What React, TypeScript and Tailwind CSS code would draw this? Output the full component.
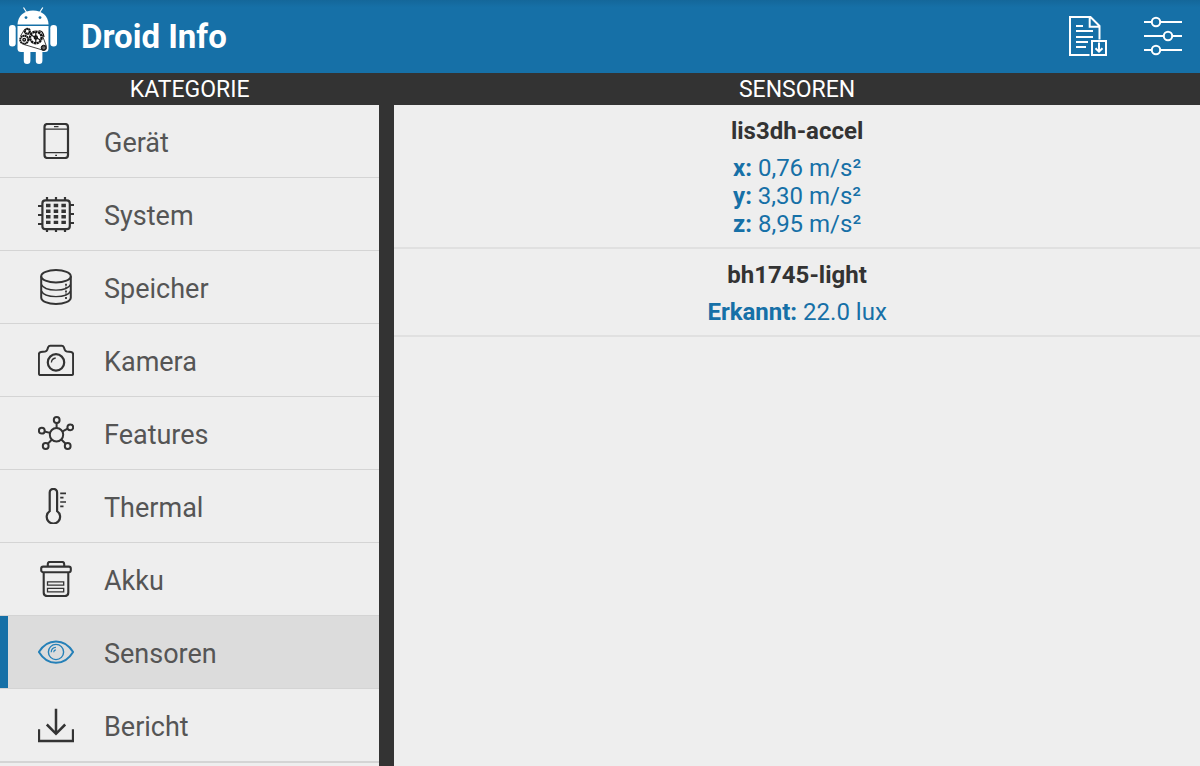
import { useState } from "react";
import type { ReactNode } from "react";

const iconStyle = "size-9 shrink-0 fill-none";
const panelTitle = "h-8 bg-[#333333] pt-px text-center text-[23px] leading-8 text-white uppercase";

type Category = { name: string; icon: ReactNode };

const categories: Category[] = [
  {
    name: "Gerät",
    icon: (
      <>
        <rect x="6.5" y="1" width="23.5" height="34" rx="3" strokeWidth="2.2" />
        <path d="M7 6.2h23M7 29.7h23" strokeWidth="1.3" />
        <path d="M16 3.6h4.5M17.2 32.4h1.8" strokeWidth="1.2" />
      </>
    ),
  },
  {
    name: "System",
    icon: (
      <>
        <rect x="4.4" y="4.4" width="27.4" height="28.8" rx="3" strokeWidth="2.2" />
        <path d="M9 1v3M18 1v3M27 1v3M9 33.5V36M18 33.5V36M27 33.5V36M0 10h4M0 19h4M0 28h4M32 9h4M32 18h4M32 27h4" strokeWidth="2.2" />
        <path d="M8 9.5h4.5M15.7 9.5h4.5M23.4 9.5h4.5M8 15.2h4.5M15.7 15.2h4.5M23.4 15.2h4.5M8 20.8h4.5M15.7 20.8h4.5M23.4 20.8h4.5M8 26.4h4.5M15.7 26.4h4.5M23.4 26.4h4.5" strokeWidth="3.4" />
      </>
    ),
  },
  {
    name: "Speicher",
    icon: (
      <>
        <ellipse cx="18" cy="7.2" rx="14.8" ry="6.2" strokeWidth="2" />
        <path d="M3.2 7.2v21.3C3.2 32.2 9.8 35 18 35s14.8-2.8 14.8-6.5V7.2" strokeWidth="2" />
        <path d="M3.5 15.5c1.2 3.4 7.2 5.6 14.5 5.6s13.3-2.2 14.5-5.6M3.5 22c1.2 3.4 7.2 5.6 14.5 5.6s13.3-2.2 14.5-5.6" strokeWidth="1.4" />
        <path d="M28 14.7v2M28 17.8v1M28 21.5v2M28 24.5v1M28 28v2" strokeWidth="1.8" />
      </>
    ),
  },
  {
    name: "Kamera",
    icon: (
      <>
        <path d="M.9 31.5V12.4c0-1.400.6-2.200 2-2.400l4.200-.5c1.200-.2 1.700-.7 2.100-1.700l1-2.600c.4-1 1-1.400 2-1.400h11.600c1 0 1.600.4 2 1.400l1 2.600c.4 1 .9 1.500 2.100 1.700l4.200.5c1.400.2 2 1 2 2.400v19.100c0 1-.7 1.600-1.600 1.600h-31c-.9 0-1.600-.6-1.600-1.600Z" strokeWidth="2" />
        <circle cx="18" cy="20.4" r="8.2" strokeWidth="2.2" />
        <path d="M13.4 20.5c.2-2.600 1.700-4.200 4.300-4.500" strokeWidth="1.300" />
      </>
    ),
  },
  {
    name: "Features",
    icon: (
      <g strokeWidth="2">
        <circle cx="18.5" cy="19.7" r="6.7" />
        <circle cx="18.7" cy="5" r="2.9" />
        <circle cx="32.3" cy="12.3" r="2.9" />
        <circle cx="29.7" cy="31" r="2.9" />
        <circle cx="7.7" cy="31" r="2.9" />
        <circle cx="3.8" cy="15.7" r="2.9" />
        <path d="M18.6 8v5M29.6 13.7l-5 2.7M27.6 28.700l-4.300-4.200M9.800 28.700l4.200-4.200M6.700 16.500l5.200 1.400" />
      </g>
    ),
  },
  {
    name: "Thermal",
    icon: (
      <>
        <path d="M11.7 23.2V4.500a3.700 3.700 0 0 1 7.400 0v18.700a6.700 6.700 0 1 1-7.400 0Z" strokeWidth="2.200" />
        <path d="M22.2 5.4H28M22.2 9.7h3.300M22.2 14H28M22.2 18.3h3.300" strokeWidth="1.700" />
      </>
    ),
  },
  {
    name: "Akku",
    icon: (
      <>
        <rect x="3.2" y="5.6" width="29.6" height="5.6" rx="2" strokeWidth="2.1" />
        <path d="M9.8 5.5V3.3C9.8 1.700 10.600.9 12 .9h12c1.400 0 2.200.8 2.200 2.400v2.200M5.700 11.400v20.200c0 2.200 1.200 3.500 3.400 3.500h17.800c2.200 0 3.400-1.300 3.400-3.500V11.400" strokeWidth="2.1" />
        <path d="M9.5 20.8h16.200v3.400H9.5zM9.5 27.4h16.200v3.400H9.5z" strokeWidth="1.3" />
      </>
    ),
  },
  {
    name: "Sensoren",
    icon: (
      <>
        <path d="M.9 18C4.500 12 10.500 7.400 18 7.400S31.500 12 35.100 18C31.500 24 25.500 28.800 18 28.800S4.500 24 .9 18Z" strokeWidth="2" />
        <circle cx="18" cy="18" r="7.6" strokeWidth="1.4" />
        <path d="M13.2 18.200c.1-2.900 2-4.800 4.700-4.900M15.700 18.200c.1-1.300.9-2.200 2.200-2.300" strokeWidth="1.2" />
      </>
    ),
  },
  {
    name: "Bericht",
    icon: (
      <>
        <path d="M18 1.800v25M8.800 17.500l9.200 9.300 9.200-9.300" strokeWidth="2.500" />
        <path d="M1 22.300v11.700h34V22.300" strokeWidth="2.300" />
      </>
    ),
  },
];

const sensors = [
  {
    name: "lis3dh-accel",
    values: [
      { label: "x:", value: "0,76 m/s²" },
      { label: "y:", value: "3,30 m/s²" },
      { label: "z:", value: "8,95 m/s²" },
    ],
  },
  {
    name: "bh1745-light",
    values: [{ label: "Erkannt:", value: "22.0 lux" }],
  },
];

const Logo = () => (
  <svg viewBox="9 6 48 58" className="h-[58px] w-12 shrink-0" aria-hidden="true">
    <g fill="#fff">
      <path d="M17.5 24.5C17.8 16 24 10.5 33 10.5S48.300 16 48.600 24.500Z" />
      <path d="M17.5 26h31v22.500a3.500 3.500 0 0 1-3.500 3.500H21a3.500 3.500 0 0 1-3.500-3.500Z" />
      <rect x="9" y="25" width="6.7" height="21.5" rx="3.3" />
      <rect x="50.3" y="25" width="6.7" height="21.5" rx="3.3" />
      <rect x="23.8" y="46" width="6.6" height="18" rx="3.3" />
      <rect x="35.8" y="46" width="6.6" height="18" rx="3.3" />
    </g>
    <path d="M23.5 7.5l3.2 5M42.8 7.5l-3.2 5" stroke="#fff" strokeWidth="1.2" />
    <circle cx="26" cy="17.6" r="1.4" fill="#1670a7" />
    <circle cx="40" cy="17.6" r="1.4" fill="#1670a7" />
    <g fill="none" stroke="#111">
      <path d="M24 44.5L43.5 50.3M42 34.5L46.5 46.5M20.5 36l4-6.5" strokeWidth=".8" />
      <circle cx="27.3" cy="31.3" r="2.5" strokeWidth="2.2" strokeDasharray="1.8 .3" />
      <circle cx="35.8" cy="37.5" r="5.8" strokeWidth="2.4" strokeDasharray="2.4 .5" />
      <circle cx="35.8" cy="37.5" r="1.5" strokeWidth="1.5" />
      <path d="M35.8 32v11M31 35l9.500 5M38.500 31c3-1 5 2 5.500 6" strokeWidth="1.2" />
      <circle cx="24.2" cy="39.7" r="4" strokeWidth="1.9" strokeDasharray="1.8 .3" />
      <circle cx="24.2" cy="39.7" r="1.3" strokeWidth="1.4" />
      <circle cx="43.8" cy="47.8" r="2.6" fill="#333" strokeWidth="1" />
      <circle cx="43.8" cy="47.8" r=".9" stroke="#aaa" strokeWidth=".6" />
    </g>
  </svg>
);

const App = () => {
  const [active, setActive] = useState("Sensoren");

  return (
    <div className="flex min-h-screen flex-col bg-[#333333] font-[Roboto,sans-serif]">
      <header className="flex h-[73px] items-center bg-linear-to-b from-[#14679a] to-[#1670a7] to-10% pr-[17px] pb-[3px] pl-[9px]">
        <Logo />
        <h1 className="ml-6 pt-[3px] text-[33px] font-bold text-white">Droid Info</h1>
        <div className="ml-auto flex gap-[35px] pt-px">
          <button aria-label="Bericht speichern" className="cursor-pointer">
            <svg viewBox="0 0 40 40" className="size-10 fill-none stroke-white">
              <path d="M21.5 39H2V1h20.500l9 9v13.500M21.700 1v9.800h9.800" strokeWidth="2" />
              <path d="M8 10h7M8 15h17M8 21h17M8 26h12M8 31h10" strokeWidth="2" />
              <path d="M24 25h14v14H24zM31 26.500v9M27.500 32.200l3.500 3.500 3.500-3.500" strokeWidth="2" />
            </svg>
          </button>
          <button aria-label="Einstellungen" className="cursor-pointer">
            <svg viewBox="0 0 40 40" className="size-10 fill-none stroke-white" strokeWidth="2">
              <path d="M1 6h8M17 6h22M1 20h20M29 20h10M1 34h8M17 34h22" />
              <circle cx="13" cy="6" r="4.2" />
              <circle cx="25" cy="20" r="4.2" />
              <circle cx="13" cy="34" r="4.2" />
            </svg>
          </button>
        </div>
      </header>

      <div className="grid grow grid-cols-[32fr_68fr] gap-x-[15px]">
        <nav className="flex flex-col bg-[#eeeeee]">
          <h2 className={panelTitle}>Kategorie</h2>
          <ul className="border-b border-[#d4d4d4]">
            {categories.map(({ name, icon }) => (
              <li key={name} className="border-b border-[#d4d4d4]">
                <button
                  onClick={() => setActive(name)}
                  className={`flex h-[72px] w-full cursor-pointer items-center gap-[30px] border-l-8 pl-[30px] text-left text-[27px] text-[#555555] ${
                    active === name ? "border-[#1670a7] bg-[#dcdcdc]" : "border-transparent"
                  }`}
                >
                  <svg viewBox="0 0 36 36" className={`${iconStyle} ${active === name ? "stroke-[#2580b8]" : "stroke-[#333333]"}`} aria-hidden="true">
                    {icon}
                  </svg>
                  <span className="pt-1">{name}</span>
                </button>
              </li>
            ))}
          </ul>
        </nav>

        <main className="bg-[#eeeeee] text-center text-2xl leading-7">
          <h2 className={panelTitle}>Sensoren</h2>
          {sensors.map((sensor) => (
            <section key={sensor.name} className="border-b-2 border-[#e0e0e0] pt-3 pb-[9px]">
              <h3 className="mb-[9px] font-bold text-[#333333]">{sensor.name}</h3>
              {sensor.values.map(({ label, value }) => (
                <p key={label} className="leading-7 text-[#1670a7]">
                  <b>{label}</b> {value}
                </p>
              ))}
            </section>
          ))}
        </main>
      </div>
    </div>
  );
};

export default App;
